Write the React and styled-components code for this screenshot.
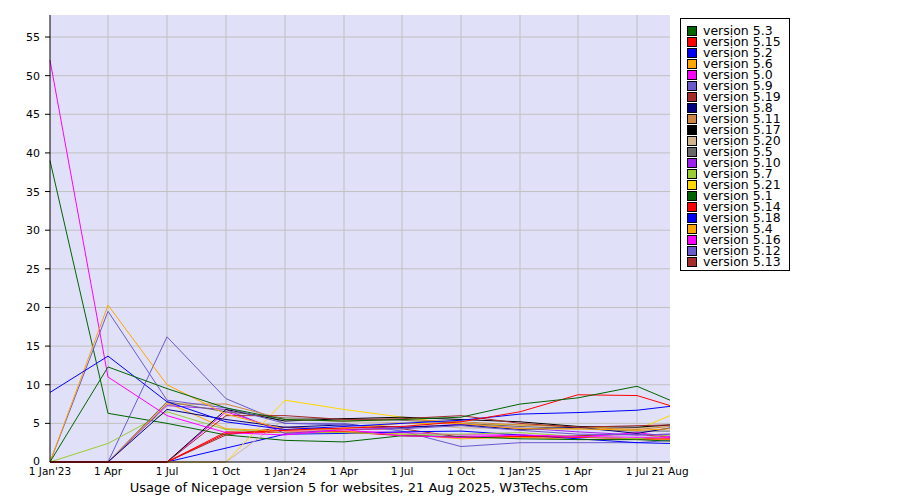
import React from "react";
import styled, { createGlobalStyle } from "styled-components";

const G = createGlobalStyle`body{margin:0;background:#fff;font-family:"DejaVu Sans",Verdana,sans-serif;}`;
const Page = styled.div`width:900px;height:500px;position:relative;display:flex;`;
const Legend = styled.div`position:absolute;left:680px;top:18px;width:110px;height:253px;border:1px solid #000;padding:6px 0 0 6px;box-sizing:border-box;background:#fff;display:flex;flex-direction:column;`;
const Row = styled.div`display:flex;align-items:center;height:11px;font-size:12.5px;line-height:11px;color:#000;white-space:nowrap;`;
const Sw = styled.span`width:8px;height:8px;border:1px solid #000;background:${p=>p.c};margin-right:6px;flex:none;`;

const xs=[50,108,167,226,285,344,402,461,520,578,637,670];
const X0=462, U=7.727;
const series=[
["5.3","#006400",[0,12.3,9.5,7,5.5,5.3,5.5,5.8,7.5,8.3,9.8,8]],
["5.15","#ff0000",[0,0,0,3.7,4.1,4.4,4.6,5.2,6.5,8.7,8.6,7.3]],
["5.2","#0000ff",[9,13.7,7.8,5.2,4.2,4.6,5,5.4,6.2,6.4,6.7,7.2]],
["5.6","#ffa500",[0,20.3,10,6.2,4.2,4.3,5,5,4.3,4.3,4.1,4.3]],
["5.0","#ff00ff",[52,11,6,3.8,3.5,4.2,3.4,3.2,3.5,3.3,3.2,3.2]],
["5.9","#6a5acd",[0,19.5,8,7,5,4.8,4.3,4.7,4.1,3.6,3.5,3.6]],
["5.19","#a52a2a",[0,0,0,6,6,5.5,5.6,6,5,4.5,4.7,4.8]],
["5.8","#000080",[0,0,6.8,5.5,4.5,4.8,4.5,4.8,4.2,4.5,3.7,4.4]],
["5.11","#cd853f",[0,0,7.5,7.5,5.5,5.3,5.5,5.2,4.8,4.5,4.2,4.6]],
["5.17","#000000",[0,0,0,6.8,5.3,5.6,5.8,5.5,5.2,4.6,4.5,4.8]],
["5.20","#d2b48c",[0,0,0,0,5.6,5.2,5.1,4.4,4.4,4.2,4.4,4.7]],
["5.5","#696969",[0,0,7.8,6.5,5.7,5.6,5.4,5,4.6,4.3,4,4]],
["5.10","#a020f0",[0,0,7.3,6.8,3.7,4.2,4.4,4.9,4.4,3.9,3.5,3.6]],
["5.7","#9acd32",[0,2.4,6.5,4.2,3.8,3.8,3.6,3.6,3.8,3.3,3,3.5]],
["5.21","#ffd700",[0,0,0,0,8,6.8,5.8,4.9,4.8,4.6,4.2,6]],
["5.1","#006400",[39,6.3,5,3.5,2.8,2.6,3.4,3.3,3,2.9,2.9,2.7]],
["5.14","#ff0000",[0,0,0,3.9,3.8,3.9,3.4,3.2,3.3,3.2,3,3]],
["5.18","#0000ff",[0,0,0,1.8,3.6,3.7,3.9,4,3.5,3,2.5,2.4]],
["5.4","#ffa500",[0,0,7.7,4.3,4,4,3.6,3,3.2,2.9,2.9,2.9]],
["5.16","#ff00ff",[0,0,0,6.5,4,4,3.8,3.5,3.5,3.2,3.8,3.3]],
["5.12","#6a5acd",[0,0,16.2,8.2,5,5,4,2,2.5,2.5,2.5,2.8]],
["5.13","#a52a2a",[0,0,0,3.5,4.5,4.2,4.3,3.2,3.2,3.4,3.6,3.2]],
];
const xl=["1 Jan'23","1 Apr","1 Jul","1 Oct","1 Jan'24","1 Apr","1 Jul","1 Oct","1 Jan'25","1 Apr","1 Jul"];

export default function App(){
  return <Page><G/>
    <svg width="900" height="500" style={{display:"block"}}>
      <rect x="50" y="15" width="620" height="447" fill="#e0e0f8"/>
      {[5,10,15,20,25,30,35,40,45,50,55].map(v=><g key={v}>
        <line x1="50" x2="670" y1={X0-v*U} y2={X0-v*U} stroke="#c0c0c0"/>
        <line x1="45" x2="50" y1={X0-v*U} y2={X0-v*U} stroke="#000"/>
        <text x="40" y={X0-v*U+4} fontSize="11" textAnchor="end" fontFamily="DejaVu Sans">{v}</text></g>)}
      <text x="40" y={X0+3} fontSize="11" textAnchor="end" fontFamily="DejaVu Sans">0</text>
      {xs.slice(1,11).map(x=><line key={x} x1={x} x2={x} y1="15" y2="462" stroke="#c0c0c0"/>)}
      {xl.map((l,i)=><text key={i} x={xs[i]} y="475" fontSize="10.5" textAnchor="middle" fontFamily="DejaVu Sans">{l}</text>)}
      <text x="670" y="475" fontSize="10.5" textAnchor="middle" fontFamily="DejaVu Sans">21 Aug</text>
      {series.slice().reverse().map(([n,c,d])=><polyline key={n} fill="none" stroke={c} strokeWidth="1" points={d.map((v,i)=>`${xs[i]},${X0-v*U}`).join(" ")}/>)}
      <line x1="50" x2="50" y1="15" y2="462" stroke="#000"/>
      <line x1="50" x2="670" y1="462" y2="462" stroke="#000"/>
      <text x="359" y="492" fontSize="13" textAnchor="middle" fontFamily="DejaVu Sans">Usage of Nicepage version 5 for websites, 21 Aug 2025, W3Techs.com</text>
    </svg>
    <Legend>{series.map(([n,c])=><Row key={n}><Sw c={c}/>version {n}</Row>)}</Legend>
  </Page>;
}
